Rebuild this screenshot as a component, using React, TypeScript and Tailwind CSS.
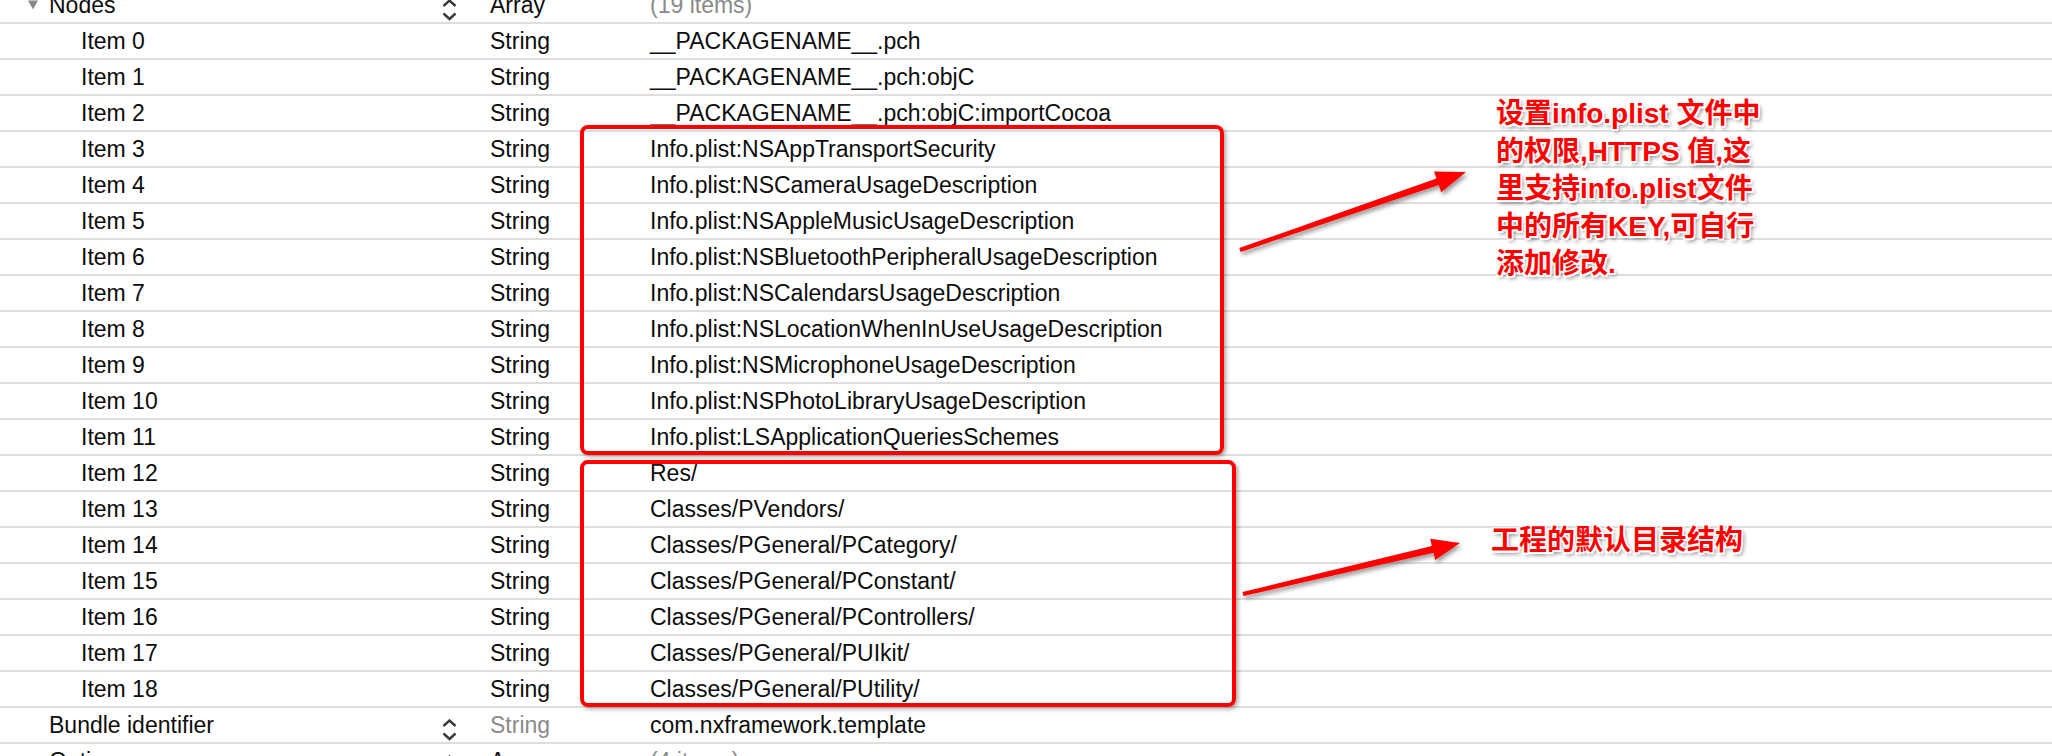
import React from 'react';

type Row = {
  key: string;
  indent: number;
  type: string;
  value: string;
  typeGray?: boolean;
  valueGray?: boolean;
  chevron?: boolean;
  toggle?: 'open' | 'closed';
};

const rows: Row[] = [
  { key: 'Nodes', indent: 28, type: 'Array', value: '(19 items)', valueGray: true, chevron: true, toggle: 'open' },
  { key: 'Item 0', indent: 81, type: 'String', value: '__PACKAGENAME__.pch' },
  { key: 'Item 1', indent: 81, type: 'String', value: '__PACKAGENAME__.pch:objC' },
  { key: 'Item 2', indent: 81, type: 'String', value: '__PACKAGENAME__.pch:objC:importCocoa' },
  { key: 'Item 3', indent: 81, type: 'String', value: 'Info.plist:NSAppTransportSecurity' },
  { key: 'Item 4', indent: 81, type: 'String', value: 'Info.plist:NSCameraUsageDescription' },
  { key: 'Item 5', indent: 81, type: 'String', value: 'Info.plist:NSAppleMusicUsageDescription' },
  { key: 'Item 6', indent: 81, type: 'String', value: 'Info.plist:NSBluetoothPeripheralUsageDescription' },
  { key: 'Item 7', indent: 81, type: 'String', value: 'Info.plist:NSCalendarsUsageDescription' },
  { key: 'Item 8', indent: 81, type: 'String', value: 'Info.plist:NSLocationWhenInUseUsageDescription' },
  { key: 'Item 9', indent: 81, type: 'String', value: 'Info.plist:NSMicrophoneUsageDescription' },
  { key: 'Item 10', indent: 81, type: 'String', value: 'Info.plist:NSPhotoLibraryUsageDescription' },
  { key: 'Item 11', indent: 81, type: 'String', value: 'Info.plist:LSApplicationQueriesSchemes' },
  { key: 'Item 12', indent: 81, type: 'String', value: 'Res/' },
  { key: 'Item 13', indent: 81, type: 'String', value: 'Classes/PVendors/' },
  { key: 'Item 14', indent: 81, type: 'String', value: 'Classes/PGeneral/PCategory/' },
  { key: 'Item 15', indent: 81, type: 'String', value: 'Classes/PGeneral/PConstant/' },
  { key: 'Item 16', indent: 81, type: 'String', value: 'Classes/PGeneral/PControllers/' },
  { key: 'Item 17', indent: 81, type: 'String', value: 'Classes/PGeneral/PUIkit/' },
  { key: 'Item 18', indent: 81, type: 'String', value: 'Classes/PGeneral/PUtility/' },
  { key: 'Bundle identifier', indent: 49, type: 'String', value: 'com.nxframework.template', typeGray: true, chevron: true },
  { key: 'Options', indent: 28, type: 'Array', value: '(4 items)', valueGray: true, chevron: true, toggle: 'closed' },
];

const Chevrons = () => (
  <svg width="15" height="22" viewBox="0 0 15 22" className="translate-y-[5px]">
    <path d="M1.5 7 L7.5 1.5 L13.5 7" fill="none" stroke="#3a3a3a" strokeWidth="2.4" />
    <path d="M1.5 14.5 L7.5 20 L13.5 14.5" fill="none" stroke="#3a3a3a" strokeWidth="2.4" />
  </svg>
);

const Toggle = ({ open }: { open: boolean }) => (
  <svg width="10" height="10" viewBox="0 0 10 10" className="mr-[11px] shrink-0">
    {open ? <path d="M0 0.5 L10 0.5 L5 9.5 Z" fill="#8a8a8a" /> : <path d="M1 0 L9.5 5 L1 10 Z" fill="#8a8a8a" />}
  </svg>
);

const PlistRow = ({ row }: { row: Row }) => (
  <div className="flex h-[36px] shrink-0 items-center border-b-2 border-[#dedede]">
    <div className="flex w-[442px] items-center" style={{ paddingLeft: row.indent }}>
      {row.toggle && <Toggle open={row.toggle === 'open'} />}
      <span>{row.key}</span>
    </div>
    <div className="flex w-[48px] items-center">{row.chevron && <Chevrons />}</div>
    <div className={`w-[160px] ${row.typeGray ? 'text-[#8a8a8a]' : ''}`}>{row.type}</div>
    <div className={`flex-1 whitespace-nowrap ${row.valueGray ? 'text-[#8a8a8a]' : ''}`}>{row.value}</div>
  </div>
);

const noteClass =
  "absolute font-bold text-[28px] leading-[37.5px] text-[#ff0000] whitespace-nowrap [font-family:'Liberation_Sans','Noto_Sans_CJK_SC',sans-serif] [text-shadow:0_0_2px_#fff,1.5px_1.5px_0_#fff,-1.5px_-1.5px_0_#fff,1.5px_-1.5px_0_#fff,-1.5px_1.5px_0_#fff,2px_3px_4px_rgba(0,0,0,0.55)]";

export default function App() {
  return (
    <div className="relative h-[756px] w-[2052px] overflow-hidden bg-white text-[23px] text-[#0d0d0d] [font-family:'Liberation_Sans',Arial,sans-serif]">
      <div className="-mt-[12px] flex flex-col">
        {rows.map((r) => (
          <PlistRow key={r.key} row={r} />
        ))}
      </div>

      {/* annotation boxes */}
      <div className="absolute left-[580px] top-[125px] h-[330px] w-[644px] rounded-[8px] border-4 border-[#ff0000] shadow-[2px_2px_4px_rgba(0,0,0,0.35)]" />
      <div className="absolute left-[580px] top-[460px] h-[247px] w-[656px] rounded-[8px] border-4 border-[#ff0000] shadow-[2px_2px_4px_rgba(0,0,0,0.35)]" />

      <svg className="pointer-events-none absolute inset-0" width="2052" height="756">
        <defs>
          <filter id="arrowShadow" x="-10%" y="-50%" width="130%" height="200%">
            <feDropShadow dx="2" dy="3" stdDeviation="2" floodColor="#000" floodOpacity="0.4" />
          </filter>
        </defs>
        <polygon
          filter="url(#arrowShadow)"
          fill="#ff0000"
          points="1239.3,248.1 1436.5,178.5 1434,171.4 1466,172 1441.2,192.2 1438.7,185.1 1240.7,251.9"
        />
        <polygon
          filter="url(#arrowShadow)"
          fill="#ff0000"
          points="1242.5,592.1 1431.9,546 1430.2,538.7 1460,543 1435.2,560.1 1433.5,552.8 1243.5,596"
        />
      </svg>

      <div className={`${noteClass} left-[1496px] top-[95px]`}>
        设置info.plist 文件中
        <br />
        的权限,HTTPS 值,这
        <br />
        里支持info.plist文件
        <br />
        中的所有KEY,可自行
        <br />
        添加修改.
      </div>
      <div className={`${noteClass} left-[1491px] top-[522px]`}>工程的默认目录结构</div>
    </div>
  );
}
